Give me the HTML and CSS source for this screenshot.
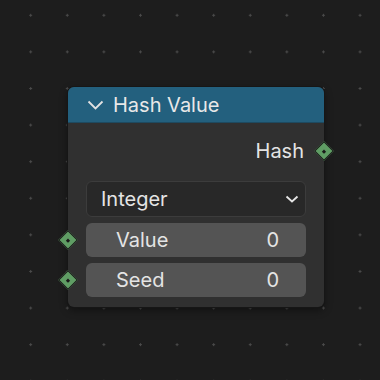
FILE: index.html
```html
<!DOCTYPE html>
<html lang="en">
<head>
	<meta charset="UTF-8">
	<title>Hash Value</title>
	<link rel="stylesheet" href="styles.css">
</head>
<body>
	<div class="node">
		<div class="node-header">
			<svg class="chev" width="17" height="10" viewBox="0 0 17 10"><path d="M1.5 1.5 L8.5 8.5 L15.5 1.5" fill="none" stroke="#e2e2e2" stroke-width="1.8"/></svg>
			<span>Hash Value</span>
		</div>
		<div class="node-body">
			<div class="row output">
				<span>Hash</span>
				<div class="socket out"></div>
			</div>
			<div class="dropdown">
				<span>Integer</span>
				<svg width="14" height="8" viewBox="0 0 14 8"><path d="M1.5 1.5 L7 6.5 L12.5 1.5" fill="none" stroke="#e6e6e6" stroke-width="1.8"/></svg>
			</div>
			<div class="field">
				<div class="socket in"></div>
				<span>Value</span>
				<span>0</span>
			</div>
			<div class="field">
				<div class="socket in"></div>
				<span>Seed</span>
				<span>0</span>
			</div>
		</div>
	</div>
</body>
</html>
```

FILE: styles.css
```css
* {margin: 0; padding: 0; box-sizing: border-box;}
html, body {width: 380px; height: 380px; overflow: hidden;}
body {
	background-color: #1d1d1d;
	background-image: radial-gradient(circle, #4a4a4a 1px, transparent 1.4px);
	background-size: 36.6px 36.6px;
	background-position: 12.4px -3px;
	font-family: Inter, "Noto Sans", sans-serif;
	color: #e4e4e4;
	position: relative;
}
.node {
	position: absolute;
	left: 68px;
	top: 87px;
	width: 256px;
	background: #303030;
	border-radius: 6px;
	box-shadow: 0 0 0 1px #161616, 0 3px 8px rgba(0,0,0,0.45);
}
.node-header {
	height: 36px;
	background: #23607e;
	border-radius: 6px 6px 0 0;
	border-bottom: 1px solid #1e4a60;
	display: flex;
	align-items: center;
	padding-left: 19px;
	font-size: 20px;
	gap: 9px;
	color: #e8e8e8;
}
.chev {margin-top: 1px;}
.node-body {
	padding: 10px 18px 10px 18px;
	display: flex;
	flex-direction: column;
}
.row {
	height: 36px;
	display: flex;
	align-items: center;
	justify-content: flex-end;
	font-size: 20px;
	position: relative;
	padding-right: 2px;
}
.dropdown {
	margin-top: 12px;
	height: 36px;
	background: #282828;
	border: 1px solid #3c3c3c;
	border-radius: 6px;
	display: flex;
	align-items: center;
	justify-content: space-between;
	padding: 0 6px 0 14px;
	font-size: 20px;
}
.field {
	margin-top: 6px;
	height: 34px;
	background: #545454;
	border-radius: 6px;
	display: flex;
	align-items: center;
	justify-content: space-between;
	padding: 0 27px 0 30px;
	font-size: 20px;
	position: relative;
}
.socket {
	position: absolute;
	width: 14px;
	height: 14px;
	background: #5f9d64;
	border: 1.5px solid #1a1a1a;
	transform: translate(-50%, -50%) rotate(45deg);
	top: 50%;
}
.socket::after {
	content: "";
	position: absolute;
	left: 50%;
	top: 50%;
	width: 3px;
	height: 3px;
	margin: -1.5px 0 0 -1.5px;
	background: #1a1a1a;
}
.socket.in {left: -18px;}
.socket.out {left: calc(100% + 18px);}
```
